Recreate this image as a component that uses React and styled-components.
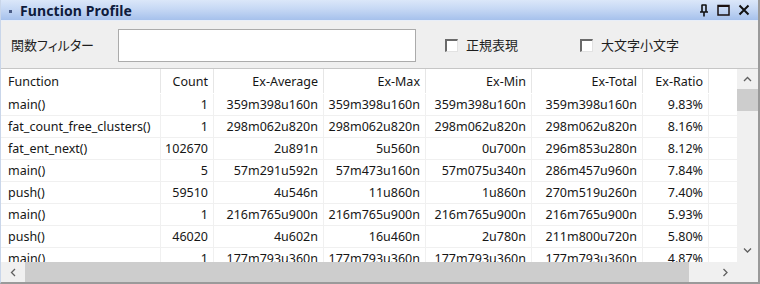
import React from "react";
import styled, { createGlobalStyle } from "styled-components";

const GlobalStyle = createGlobalStyle`
  html, body {
    margin: 0;
    padding: 0;
    background: #ffffff;
  }
  body {
    font-family: "Noto Sans", "Noto Sans CJK JP", sans-serif;
  }
`;

const Window = styled.div`
  width: 760px;
  height: 284px;
  box-sizing: border-box;
  display: flex;
  flex-direction: column;
  border-left: 1px solid #c9d6ea;
  border-right: 2px solid #9a9a9a;
  border-bottom: 2px solid #9a9a9a;
  background: #f0f0f0;
  overflow: hidden;
`;

const TitleBar = styled.div`
  height: 21px;
  flex: none;
  display: flex;
  align-items: center;
  padding-left: 8px;
  padding-right: 8px;
  background: linear-gradient(#dbe7f9 0%, #c6d8f4 45%, #a6c1ec 100%);
  border-bottom: 1px solid #e8eef8;
  box-sizing: border-box;
`;

const Bullet = styled.span`
  width: 3px;
  height: 3px;
  background: #4a5c86;
  margin-right: 8px;
  margin-top: 2px;
`;

const Title = styled.span`
  font-family: "Noto Sans", "DejaVu Sans", sans-serif;
  font-weight: 700;
  font-size: 14px;
  color: #0e1b3c;
  letter-spacing: 0.1px;
  flex: 1;
`;

const TitleButtons = styled.div`
  display: flex;
  align-items: center;
  gap: 8px;
`;

const FilterBar = styled.div`
  height: 48px;
  flex: none;
  display: flex;
  align-items: center;
  box-sizing: border-box;
  padding-left: 10px;
  background: #efefef;
  border-bottom: 1px solid #c6c6c6;
`;

const FilterLabel = styled.span`
  width: 107px;
  font-family: "Noto Sans CJK JP", sans-serif;
  font-size: 13px;
  font-feature-settings: "palt";
  color: #1e1e1e;
`;

const FilterInput = styled.div`
  width: 298px;
  height: 33px;
  box-sizing: border-box;
  border: 1px solid #ababab;
  background: #ffffff;
  margin-top: 1px;
`;

const CheckOption = styled.label`
  display: flex;
  align-items: center;
  margin-left: ${(p) => p.offset}px;
  font-family: "Noto Sans CJK JP", sans-serif;
  font-size: 13px;
  color: #1e1e1e;
`;

const Box = styled.span`
  width: 13px;
  height: 13px;
  box-sizing: border-box;
  border-top: 2px solid #6a6a6a;
  border-left: 2px solid #6a6a6a;
  border-right: 1px solid #e2e2e2;
  border-bottom: 1px solid #e2e2e2;
  background: #ffffff;
  margin-right: 8px;
  margin-top: 1px;
`;

const TableArea = styled.div`
  flex: 1;
  display: grid;
  grid-template-columns: 1fr 21px;
  grid-template-rows: 1fr 20px;
  background: #ffffff;
  min-height: 0;
`;

const Viewport = styled.div`
  overflow: hidden;
  background: #ffffff;
`;

const Row = styled.div`
  display: grid;
  grid-template-columns: 160px 53px 110px 102px 106px 111px 66px 1fr;
  height: ${(p) => (p.header ? 25 : 22)}px;
  box-sizing: border-box;
  border-bottom: 1px solid ${(p) => (p.header ? "#ffffff" : "#f0f0f0")};
`;

const Cell = styled.div`
  display: flex;
  align-items: center;
  justify-content: ${(p) => (p.left ? "flex-start" : "flex-end")};
  padding: ${(p) => (p.left ? "0 0 0 7px" : "0 5px 0 0")};
  border-right: 1px solid ${(p) => (p.header ? "#e6e6e6" : "#f0f0f0")};
  font-size: 12.5px;
  color: #161616;
  white-space: nowrap;
  overflow: hidden;
`;

const Filler = styled.div``;

const VScroll = styled.div`
  background: #f0f0f0;
  display: flex;
  flex-direction: column;
  align-items: stretch;
`;

const HScroll = styled.div`
  background: #f0f0f0;
  display: flex;
  align-items: stretch;
`;

const Corner = styled.div`
  background: #f0f0f0;
`;

const ArrowBtn = styled.div`
  flex: none;
  width: ${(p) => p.w}px;
  height: ${(p) => p.h}px;
  display: flex;
  align-items: center;
  justify-content: center;
`;

const Track = styled.div`
  flex: 1;
  display: flex;
  flex-direction: ${(p) => (p.vertical ? "column" : "row")};
`;

const Thumb = styled.div`
  background: #cdcdcd;
  flex: none;
  width: ${(p) => p.w};
  height: ${(p) => p.h};
`;

const columns = ["Function", "Count", "Ex-Average", "Ex-Max", "Ex-Min", "Ex-Total", "Ex-Ratio"];

const rows = [
  ["main()", "1", "359m398u160n", "359m398u160n", "359m398u160n", "359m398u160n", "9.83%"],
  ["fat_count_free_clusters()", "1", "298m062u820n", "298m062u820n", "298m062u820n", "298m062u820n", "8.16%"],
  ["fat_ent_next()", "102670", "2u891n", "5u560n", "0u700n", "296m853u280n", "8.12%"],
  ["main()", "5", "57m291u592n", "57m473u160n", "57m075u340n", "286m457u960n", "7.84%"],
  ["push()", "59510", "4u546n", "11u860n", "1u860n", "270m519u260n", "7.40%"],
  ["main()", "1", "216m765u900n", "216m765u900n", "216m765u900n", "216m765u900n", "5.93%"],
  ["push()", "46020", "4u602n", "16u460n", "2u780n", "211m800u720n", "5.80%"],
  ["main()", "1", "177m793u360n", "177m793u360n", "177m793u360n", "177m793u360n", "4.87%"],
];

const Chevron = ({ dir }) => {
  const paths = {
    up: "M1 5 L4.5 1.5 L8 5",
    down: "M1 1.5 L4.5 5 L8 1.5",
    left: "M5 1 L1.5 4.5 L5 8",
    right: "M1.5 1 L5 4.5 L1.5 8",
  };
  const vertical = dir === "up" || dir === "down";
  return (
    <svg width={vertical ? 9 : 7} height={vertical ? 7 : 9} viewBox={vertical ? "0 0 9 7" : "0 0 7 9"}>
      <path d={paths[dir]} fill="none" stroke="#606060" strokeWidth="1.3" />
    </svg>
  );
};

const PinIcon = () => (
  <svg width="10" height="13" viewBox="0 0 10 13">
    <path d="M2.5 1 H7.5 M3 1 V8 M7 1 V8 M1 8 H9 M5 8 V12.5" fill="none" stroke="#111" strokeWidth="1.6" />
  </svg>
);

const MaxIcon = () => (
  <svg width="13" height="12" viewBox="0 0 13 12">
    <rect x="1" y="1.5" width="11" height="9.5" fill="none" stroke="#1a1010" strokeWidth="1.5" />
    <line x1="1" y1="2" x2="12" y2="2" stroke="#1a1010" strokeWidth="2" />
  </svg>
);

const CloseIcon = () => (
  <svg width="12" height="12" viewBox="0 0 12 12">
    <path d="M1.5 1.5 L10.5 10.5 M10.5 1.5 L1.5 10.5" stroke="#111" strokeWidth="2" />
  </svg>
);

export default function App() {
  return (
    <>
      <GlobalStyle />
      <Window>
        <TitleBar>
          <Bullet />
          <Title>Function Profile</Title>
          <TitleButtons>
            <PinIcon />
            <MaxIcon />
            <CloseIcon />
          </TitleButtons>
        </TitleBar>
        <FilterBar>
          <FilterLabel>関数フィルター</FilterLabel>
          <FilterInput />
          <CheckOption offset={29}>
            <Box />
            正規表現
          </CheckOption>
          <CheckOption offset={62}>
            <Box />
            大文字小文字
          </CheckOption>
        </FilterBar>
        <TableArea>
          <Viewport>
            <Row header>
              {columns.map((c, i) => (
                <Cell key={c} header left={i === 0}>
                  {c}
                </Cell>
              ))}
              <Filler />
            </Row>
            {rows.map((r, ri) => (
              <Row key={ri}>
                {r.map((v, i) => (
                  <Cell key={i} left={i === 0}>
                    {v}
                  </Cell>
                ))}
                <Filler />
              </Row>
            ))}
          </Viewport>
          <VScroll>
            <ArrowBtn w={21} h={20}>
              <Chevron dir="up" />
            </ArrowBtn>
            <Track vertical>
              <Thumb w="100%" h="22px" />
            </Track>
            <ArrowBtn w={21} h={24}>
              <Chevron dir="down" />
            </ArrowBtn>
          </VScroll>
          <HScroll>
            <ArrowBtn w={24} h={20}>
              <Chevron dir="left" />
            </ArrowBtn>
            <Track>
              <Thumb w="664px" h="100%" />
            </Track>
            <ArrowBtn w={24} h={20}>
              <Chevron dir="right" />
            </ArrowBtn>
          </HScroll>
          <Corner />
        </TableArea>
      </Window>
    </>
  );
}
